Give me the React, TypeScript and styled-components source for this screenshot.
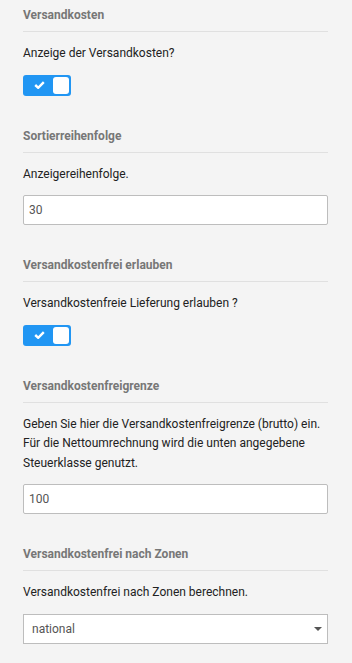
import React, { useState } from 'react';
import { styled, createGlobalStyle } from 'styled-components';

const GlobalStyle = createGlobalStyle`
  html, body {
    margin: 0;
    padding: 0;
    background: #f4f4f4;
  }
  * {
    box-sizing: border-box;
  }
`;

const Page = styled.div`
  min-height: 100vh;
  background: #f4f4f4;
  padding: 5px 24px 20px 23px;
  font-family: Roboto, 'Liberation Sans', sans-serif;
  display: flex;
  flex-direction: column;
  gap: 30px;
`;

const Section = styled.section`
  display: flex;
  flex-direction: column;
`;

const Heading = styled.h3`
  margin: 0;
  font-size: 12px;
  font-weight: 700;
  line-height: 20px;
  color: #777;
  padding-bottom: 6px;
  border-bottom: 1px solid #e0e0e0;
`;

const Label = styled.p`
  margin: 12px 0 11px;
  font-size: 12px;
  line-height: 19.5px;
  color: #222;
`;

const Toggle = styled.button<{ $on: boolean }>`
  width: 48px;
  height: 21px;
  padding: 2px;
  border: none;
  border-radius: 3px;
  background: ${(p) => (p.$on ? '#2196f3' : '#ccc')};
  display: flex;
  align-items: center;
  justify-content: space-between;
  flex-direction: ${(p) => (p.$on ? 'row' : 'row-reverse')};
  cursor: pointer;
`;

const CheckArea = styled.span`
  flex: 1;
  display: flex;
  justify-content: center;
  align-items: center;
  padding-left: 1px;
`;

const Knob = styled.span`
  width: 16px;
  height: 17px;
  border-radius: 3px;
  background: #fff;
`;

const TextInput = styled.input`
  width: 100%;
  height: 30px;
  border: 1px solid #bdbdbd;
  border-radius: 2px;
  background: #fff;
  padding: 0 5px;
  font-family: Roboto, 'Liberation Sans', sans-serif;
  font-size: 12px;
  color: #555;
  outline: none;
`;

const SelectWrap = styled.div`
  position: relative;
  width: 100%;
`;

const Select = styled.select`
  width: 100%;
  height: 30px;
  border: 1px solid #bdbdbd;
  border-radius: 0;
  background: #fff;
  padding: 0 20px 0 8px;
  font-family: Roboto, 'Liberation Sans', sans-serif;
  font-size: 12px;
  color: #555;
  appearance: none;
  -webkit-appearance: none;
  outline: none;
`;

const Caret = styled.svg`
  position: absolute;
  right: 6px;
  top: 13px;
  pointer-events: none;
`;

const Switch = ({ initial }: { initial: boolean }) => {
  const [on, setOn] = useState(initial);
  return (
    <Toggle $on={on} onClick={() => setOn(!on)}>
      <CheckArea>
        {on && (
          <svg width="11" height="8" viewBox="0 0 11 8">
            <path d="M1.2 4 L4.2 6.8 L9.8 1.2" fill="none" stroke="#fff" strokeWidth="2.4" />
          </svg>
        )}
      </CheckArea>
      <Knob />
    </Toggle>
  );
};

const App = () => {
  const [order, setOrder] = useState('30');
  const [limit, setLimit] = useState('100');
  const [zone, setZone] = useState('national');

  return (
    <Page>
      <GlobalStyle />
      <Section>
        <Heading>Versandkosten</Heading>
        <Label>Anzeige der Versandkosten?</Label>
        <Switch initial />
      </Section>

      <Section>
        <Heading>Sortierreihenfolge</Heading>
        <Label>Anzeigereihenfolge.</Label>
        <TextInput value={order} onChange={(e) => setOrder(e.target.value)} />
      </Section>

      <Section>
        <Heading>Versandkostenfrei erlauben</Heading>
        <Label>Versandkostenfreie Lieferung erlauben ?</Label>
        <Switch initial />
      </Section>

      <Section>
        <Heading>Versandkostenfreigrenze</Heading>
        <Label>
          Geben Sie hier die Versandkostenfreigrenze (brutto) ein. Für die Nettoumrechnung wird die
          unten angegebene Steuerklasse genutzt.
        </Label>
        <TextInput value={limit} onChange={(e) => setLimit(e.target.value)} />
      </Section>

      <Section>
        <Heading>Versandkostenfrei nach Zonen</Heading>
        <Label>Versandkostenfrei nach Zonen berechnen.</Label>
        <SelectWrap>
          <Select value={zone} onChange={(e) => setZone(e.target.value)}>
            <option value="national">national</option>
            <option value="international">international</option>
          </Select>
          <Caret width="8" height="4" viewBox="0 0 8 4">
            <path d="M0 0 L8 0 L4 4 Z" fill="#555" />
          </Caret>
        </SelectWrap>
      </Section>
    </Page>
  );
};

export default App;
